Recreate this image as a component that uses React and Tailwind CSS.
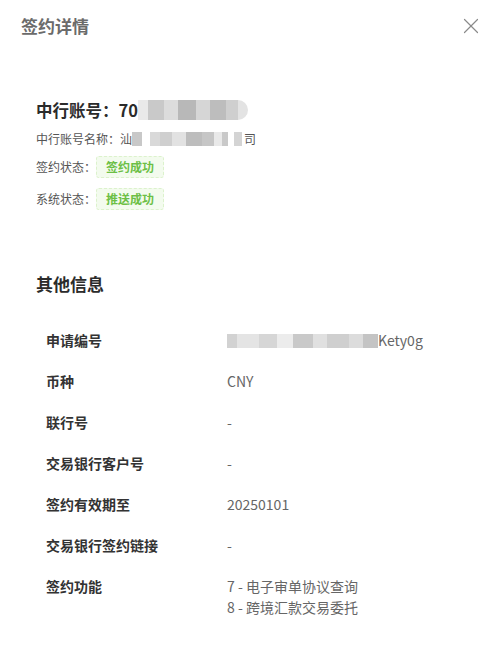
import { X } from "lucide-react";

const font = { fontFamily: '"Noto Sans CJK SC", "Noto Sans", sans-serif' };

function Mosaic({ cells, h = "h-[14px]", className = "" }) {
  // blurred-out area, drawn as grey blocks
  return (
    <span className={`inline-flex align-middle overflow-hidden ${className}`}>
      {cells.map((c, i) => (
        <span key={i} className={`inline-block ${h}`} style={{ width: c[0], background: c[1] }} />
      ))}
    </span>
  );
}

function Tag({ children }) {
  return (
    <span className="inline-flex items-center h-[22px] px-[9px] rounded-[3px] border border-dashed border-[#dcf2cc] bg-[#f3fbee] text-[12px] font-bold text-[#6cbf45]">
      {children}
    </span>
  );
}

const rows = [
  { label: "申请编号", value: "id" },
  { label: "币种", value: "CNY" },
  { label: "联行号", value: "-" },
  { label: "交易银行客户号", value: "-" },
  { label: "签约有效期至", value: "20250101" },
  { label: "交易银行签约链接", value: "-" },
  { label: "签约功能", value: ["7 - 电子审单协议查询", "8 - 跨境汇款交易委托"] },
];

export default function App() {
  return (
    <div className="w-[500px] h-[654px] bg-white text-[#333]" style={font}>
      <div className="flex items-center justify-between pl-[21px] pr-[16px] h-[52px]">
        <h2 className="text-[17px] font-bold text-[#6b6b6b]">签约详情</h2>
        <X className="w-[26px] h-[26px] text-[#8a8a8a]" strokeWidth={1.1} />
      </div>

      <div className="pl-[36px] pt-[44px]">
        <div className="flex items-center h-[28px] text-[16.5px] font-bold text-[#2b2b2b]">
          中行账号：70
          <Mosaic
            h="h-[20px]"
            className="rounded-r-full"
            cells={[
              [10, "#e9e9e9"], [16, "#c9c9c9"], [14, "#dcdcdc"], [18, "#b8b8b8"],
              [14, "#d6d6d6"], [16, "#bdbdbd"], [12, "#cfcfcf"], [10, "#e3e3e3"],
            ]}
          />
        </div>
        <div className="flex items-center mt-[5px] h-[20px] text-[12px] text-[#555]">
          中行账号名称：汕
          <Mosaic
            cells={[
              [10, "#c8c8c8"], [8, "#ffffff"], [10, "#d9d9d9"], [12, "#cfcfcf"],
              [14, "#e2e2e2"], [16, "#bdbdbd"], [12, "#c6c6c6"], [8, "#e9e9e9"], [6, "#c9c9c9"], [6, "#ffffff"], [8, "#d4d4d4"],
            ]}
          />
          <span className="ml-[2px]">司</span>
        </div>
        <div className="flex items-center mt-[7px] text-[12px] text-[#555]">
          签约状态：<Tag>签约成功</Tag>
        </div>
        <div className="flex items-center mt-[10px] text-[12px] text-[#555]">
          系统状态：<Tag>推送成功</Tag>
        </div>

        <h3 className="mt-[61px] text-[17px] font-bold text-[#2b2b2b] h-[26px] leading-[26px]">其他信息</h3>

        <div className="mt-[33px] pl-[10px] flex flex-col gap-[20px]">
          {rows.map((r) => (
            <div key={r.label} className="flex text-[14px] leading-[21px]">
              <div className="w-[181px] font-bold text-[#333]">{r.label}</div>
              <div className="text-[#666]">
                {r.value === "id" ? (
                  <span className="flex items-center">
                    <Mosaic
                      cells={[
                        [10, "#d2d2d2"], [22, "#e4e4e4"], [18, "#d6d6d6"], [16, "#ececec"],
                        [20, "#c9c9c9"], [14, "#e0e0e0"], [22, "#cfcfcf"], [14, "#dcdcdc"], [15, "#c4c4c4"],
                      ]}
                    />
                    Kety0g
                  </span>
                ) : Array.isArray(r.value) ? (
                  r.value.map((v) => <div key={v}>{v}</div>)
                ) : (
                  r.value
                )}
              </div>
            </div>
          ))}
        </div>
      </div>
    </div>
  );
}
